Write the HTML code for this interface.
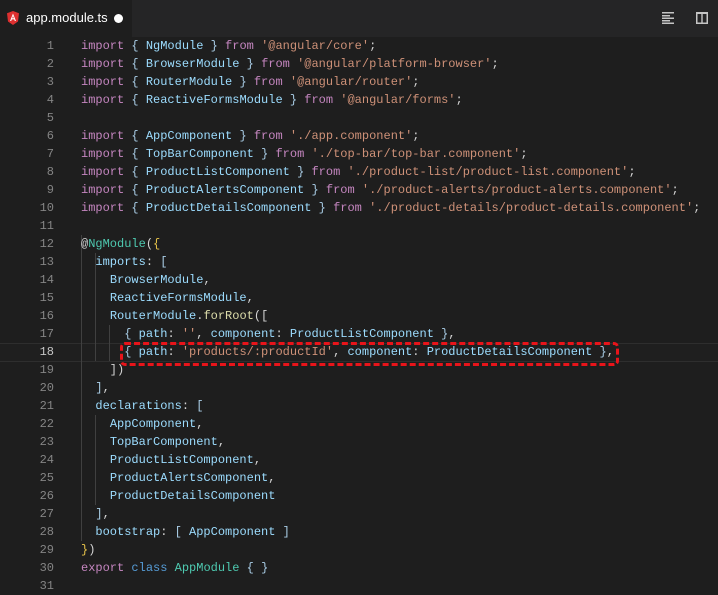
<!DOCTYPE html>
<html><head><meta charset="utf-8"><style>
*{margin:0;padding:0;box-sizing:border-box}
body{width:718px;height:584px;overflow:hidden;background:#1e1e1e;font-family:"Liberation Mono",monospace;font-size:12px;position:relative}
.tabs{position:absolute;left:0;top:0;width:718px;height:37px;background:#252526}
.tab{position:absolute;left:0;top:0;width:132px;height:37px;background:#1e1e1e}
.tab .name{position:absolute;left:26px;top:10px;font-family:"Liberation Sans",sans-serif;font-size:13px;color:#fff}
.dot{position:absolute;left:114px;top:14px;width:9px;height:9px;border-radius:50%;background:#fff}
.ln{position:absolute;left:0;width:54px;text-align:right;color:#858585;height:18px;line-height:18px}
.c{position:absolute;left:81px;height:18px;line-height:18px;white-space:pre;color:#d4d4d4}
.k{color:#c586c0}.i{color:#9cdcfe}.s{color:#ce9178}.b{color:#569cd6}.t{color:#4ec9b0}.p{color:#a9cde6}
.g{position:absolute;width:1px;background:#404040}
</style></head><body>
<div class="tabs"><div class="tab">
<svg style="position:absolute;left:7px;top:11px" width="12" height="14" viewBox="0 0 12 14"><path d="M6 0L12 2.2 11 10.5 6 14 1 10.5 0 2.2Z" fill="#dd3030"/><path d="M6 2.5L9 10H7.8L7.2 8.4H4.8L4.2 10H3ZM5.2 7.3H6.8L6 5Z" fill="#fff"/></svg>
<span class="name">app.module.ts</span><div class="dot"></div></div>
<svg style="position:absolute;left:662px;top:12px" width="12" height="12"><rect x="0" y="0" width="12" height="1.5" fill="#c5c5c5"/><rect x="0" y="3" width="8" height="1.5" fill="#c5c5c5"/><rect x="0" y="5.5" width="12" height="1.5" fill="#c5c5c5"/><rect x="0" y="8" width="8" height="1.5" fill="#c5c5c5"/><rect x="0" y="10.5" width="12" height="1.5" fill="#c5c5c5"/></svg>
<svg style="position:absolute;left:696px;top:12px" width="12" height="12"><rect x="0.75" y="0.75" width="10.5" height="10.5" fill="none" stroke="#c5c5c5" stroke-width="1.5"/><rect x="0" y="0" width="12" height="2" fill="#c5c5c5"/><rect x="5.3" y="0" width="1.4" height="12" fill="#c5c5c5"/></svg>
</div>
<div style="position:absolute;left:0;top:343px;width:718px;height:19px;border-top:1px solid #2e2e2e;border-bottom:1px solid #2e2e2e;background:#1f1f1f"></div>
<div class="g" style="left:81px;top:235px;height:306px"></div>
<div class="g" style="left:95px;top:253px;height:108px"></div>
<div class="g" style="left:109px;top:325px;height:36px"></div>
<div class="g" style="left:95px;top:415px;height:90px"></div>
<div class="g" style="left:81px;top:523px;height:0"></div>

<div class="ln" style="top:37px">1</div><div class="c" style="top:37px"><span class="k">import</span> <span class="p">{</span> <span class="i">NgModule</span> <span class="p">}</span> <span class="k">from</span> <span class="s">'@angular/core'</span>;</div>
<div class="ln" style="top:55px">2</div><div class="c" style="top:55px"><span class="k">import</span> <span class="p">{</span> <span class="i">BrowserModule</span> <span class="p">}</span> <span class="k">from</span> <span class="s">'@angular/platform-browser'</span>;</div>
<div class="ln" style="top:73px">3</div><div class="c" style="top:73px"><span class="k">import</span> <span class="p">{</span> <span class="i">RouterModule</span> <span class="p">}</span> <span class="k">from</span> <span class="s">'@angular/router'</span>;</div>
<div class="ln" style="top:91px">4</div><div class="c" style="top:91px"><span class="k">import</span> <span class="p">{</span> <span class="i">ReactiveFormsModule</span> <span class="p">}</span> <span class="k">from</span> <span class="s">'@angular/forms'</span>;</div>
<div class="ln" style="top:109px">5</div>
<div class="ln" style="top:127px">6</div><div class="c" style="top:127px"><span class="k">import</span> <span class="p">{</span> <span class="i">AppComponent</span> <span class="p">}</span> <span class="k">from</span> <span class="s">'./app.component'</span>;</div>
<div class="ln" style="top:145px">7</div><div class="c" style="top:145px"><span class="k">import</span> <span class="p">{</span> <span class="i">TopBarComponent</span> <span class="p">}</span> <span class="k">from</span> <span class="s">'./top-bar/top-bar.component'</span>;</div>
<div class="ln" style="top:163px">8</div><div class="c" style="top:163px"><span class="k">import</span> <span class="p">{</span> <span class="i">ProductListComponent</span> <span class="p">}</span> <span class="k">from</span> <span class="s">'./product-list/product-list.component'</span>;</div>
<div class="ln" style="top:181px">9</div><div class="c" style="top:181px"><span class="k">import</span> <span class="p">{</span> <span class="i">ProductAlertsComponent</span> <span class="p">}</span> <span class="k">from</span> <span class="s">'./product-alerts/product-alerts.component'</span>;</div>
<div class="ln" style="top:199px">10</div><div class="c" style="top:199px"><span class="k">import</span> <span class="p">{</span> <span class="i">ProductDetailsComponent</span> <span class="p">}</span> <span class="k">from</span> <span class="s">'./product-details/product-details.component'</span>;</div>
<div class="ln" style="top:217px">11</div>
<div class="ln" style="top:235px">12</div><div class="c" style="top:235px">@<span class="t">NgModule</span>(<span style="color:#e8c44a">{</span></div>
<div class="ln" style="top:253px">13</div><div class="c" style="top:253px">  <span class="i">imports</span>: <span class="p">[</span></div>
<div class="ln" style="top:271px">14</div><div class="c" style="top:271px">    <span class="i">BrowserModule</span>,</div>
<div class="ln" style="top:289px">15</div><div class="c" style="top:289px">    <span class="i">ReactiveFormsModule</span>,</div>
<div class="ln" style="top:307px">16</div><div class="c" style="top:307px">    <span class="i">RouterModule</span>.<span style="color:#dcdcaa">forRoot</span>([</div>
<div class="ln" style="top:325px">17</div><div class="c" style="top:325px">      <span class="p">{</span> <span class="i">path</span>: <span class="s">''</span>, <span class="i">component</span>: <span class="i">ProductListComponent</span> <span class="p">}</span>,</div>
<div class="ln" style="top:343px;color:#c6c6c6">18</div><div class="c" style="top:343px">      <span class="p">{</span> <span class="i">path</span>: <span class="s">'products/:productId'</span>, <span class="i">component</span>: <span class="i">ProductDetailsComponent</span> <span class="p">}</span>,</div>
<div class="ln" style="top:361px">19</div><div class="c" style="top:361px">    ])</div>
<div class="ln" style="top:379px">20</div><div class="c" style="top:379px">  <span class="p">]</span>,</div>
<div class="ln" style="top:397px">21</div><div class="c" style="top:397px">  <span class="i">declarations</span>: <span class="p">[</span></div>
<div class="ln" style="top:415px">22</div><div class="c" style="top:415px">    <span class="i">AppComponent</span>,</div>
<div class="ln" style="top:433px">23</div><div class="c" style="top:433px">    <span class="i">TopBarComponent</span>,</div>
<div class="ln" style="top:451px">24</div><div class="c" style="top:451px">    <span class="i">ProductListComponent</span>,</div>
<div class="ln" style="top:469px">25</div><div class="c" style="top:469px">    <span class="i">ProductAlertsComponent</span>,</div>
<div class="ln" style="top:487px">26</div><div class="c" style="top:487px">    <span class="i">ProductDetailsComponent</span></div>
<div class="ln" style="top:505px">27</div><div class="c" style="top:505px">  <span class="p">]</span>,</div>
<div class="ln" style="top:523px">28</div><div class="c" style="top:523px">  <span class="i">bootstrap</span>: <span class="p">[</span> <span class="i">AppComponent</span> <span class="p">]</span></div>
<div class="ln" style="top:541px">29</div><div class="c" style="top:541px"><span style="color:#e8c44a">}</span>)</div>
<div class="ln" style="top:559px">30</div><div class="c" style="top:559px"><span class="k">export</span> <span class="b">class</span> <span class="t">AppModule</span> <span class="p">{</span> <span class="p">}</span></div>
<div class="ln" style="top:577px">31</div>
<div style="position:absolute;left:120px;top:342px;width:499px;height:24px;border:3px dashed #e8141a;border-radius:5px"></div>
</body></html>
